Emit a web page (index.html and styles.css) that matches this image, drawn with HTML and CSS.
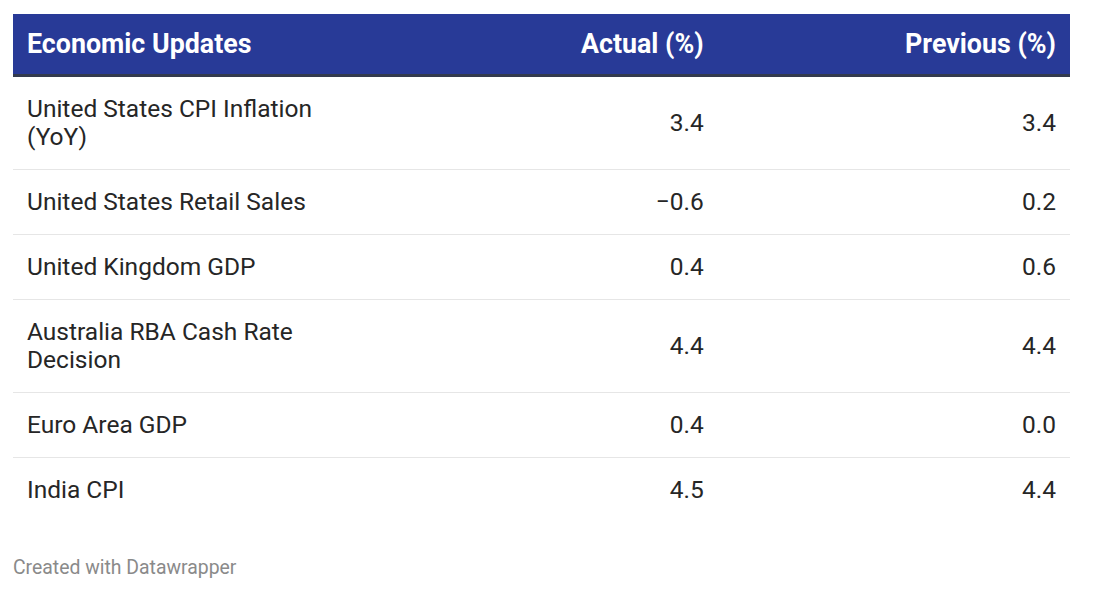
FILE: index.html
```html
<!DOCTYPE html>
<html lang="en">
<head>
<meta charset="utf-8">
<title>Economic Updates</title>
<link rel="stylesheet" href="styles.css">
</head>
<body>
<div class="chart">
  <table class="tbl">
    <thead>
      <tr>
        <th class="c-name">Economic Updates</th>
        <th class="c-num">Actual (%)</th>
        <th class="c-num">Previous (%)</th>
      </tr>
    </thead>
    <tbody>
      <tr><td class="c-name">United States CPI Inflation (YoY)</td><td class="c-num">3.4</td><td class="c-num">3.4</td></tr>
      <tr><td class="c-name">United States Retail Sales</td><td class="c-num">−0.6</td><td class="c-num">0.2</td></tr>
      <tr><td class="c-name">United Kingdom GDP</td><td class="c-num">0.4</td><td class="c-num">0.6</td></tr>
      <tr><td class="c-name">Australia RBA Cash Rate Decision</td><td class="c-num">4.4</td><td class="c-num">4.4</td></tr>
      <tr><td class="c-name">Euro Area GDP</td><td class="c-num">0.4</td><td class="c-num">0.0</td></tr>
      <tr class="last"><td class="c-name">India CPI</td><td class="c-num">4.5</td><td class="c-num">4.4</td></tr>
    </tbody>
  </table>
  <div class="footer">Created with Datawrapper</div>
</div>
</body>
</html>
```
FILE: styles.css
```css
html, body {
  margin: 0;
  padding: 0;
  background: #ffffff;
}
body {
  font-family: Roboto, "Liberation Sans", Arial, sans-serif;
  color: #262626;
}
.chart {
  padding: 14px 23px 0 13px;
}
.tbl {
  width: 100%;
  border-collapse: collapse;
  table-layout: fixed;
}
.tbl th {
  background: #283a97;
  color: #ffffff;
  font-weight: 700;
  font-size: 26.8px;
  line-height: 30px;
  height: 61px;
  padding: 0 14px;
  border-bottom: 3px solid #333a4e;
  box-sizing: border-box;
  vertical-align: middle;
}
.tbl td {
  font-size: 24.5px;
  line-height: 28px;
  padding: 18px 14px 18px 14px;
  border-bottom: 1px solid #e6e6e6;
  vertical-align: middle;
}
.tbl tr.last td {
  border-bottom: none;
}
.c-name {
  text-align: left;
}
.c-num {
  text-align: right;
}
.footer {
  margin-top: 34px;
  font-size: 19.4px;
  color: #8a8a8a;
}
```
